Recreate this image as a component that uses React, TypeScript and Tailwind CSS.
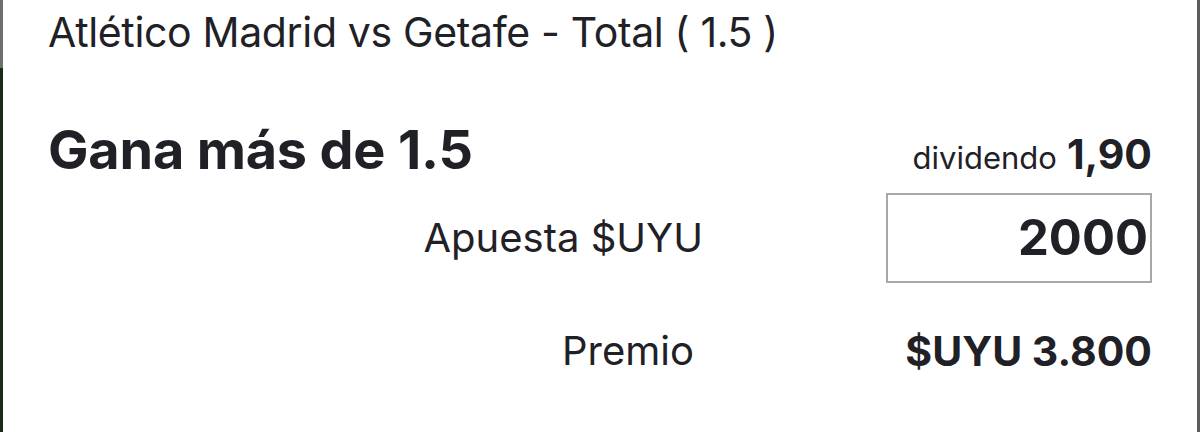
export default function App() {
  return (
    <div
      className="relative h-[432px] w-[1200px] overflow-hidden bg-white text-[#1f2126]"
      style={{ fontFamily: "Inter, 'Noto Sans', sans-serif" }}
    >
      {/* edges of the neighbouring screens */}
      <div className="absolute left-0 top-0 h-full w-[3px] bg-[#1b2a17]">
        <div className="h-[68px] w-full bg-[#6e6e6e]" />
      </div>
      <div className="absolute right-0 top-0 h-full w-[3px] bg-[#5c5c5c]" />

      <div className="flex flex-col pl-[48px] pr-[48px]">
        <div className="pt-[4px] text-[41px] leading-[56px] tracking-[-0.35px]">
          Atlético Madrid vs Getafe - Total ( 1.5 )
        </div>

        <div className="mt-[60px] flex items-baseline justify-between">
          <div className="text-[54px] font-bold leading-[60px] tracking-[-0.2px]">Gana más de 1.5</div>
          <div className="flex items-baseline gap-[10px]">
            <span className="text-[31px]">dividendo</span>
            <span className="text-[41px] font-bold">1,90</span>
          </div>
        </div>

        <div className="mt-[7px] flex items-center">
          <div className="w-[655px] text-right text-[40px]">Apuesta $UYU</div>
          <div className="ml-[183px] flex h-[90px] flex-1 items-center justify-end border-2 border-[#a9a9a9] pr-[2px]">
            <span className="text-[49px] font-bold">2000</span>
          </div>
        </div>

        <div className="mt-[38px] flex items-center justify-between">
          <div className="w-[646px] text-right text-[40px]">Premio</div>
          <div className="text-[41px] font-bold">$UYU 3.800</div>
        </div>
      </div>
    </div>
  )
}
